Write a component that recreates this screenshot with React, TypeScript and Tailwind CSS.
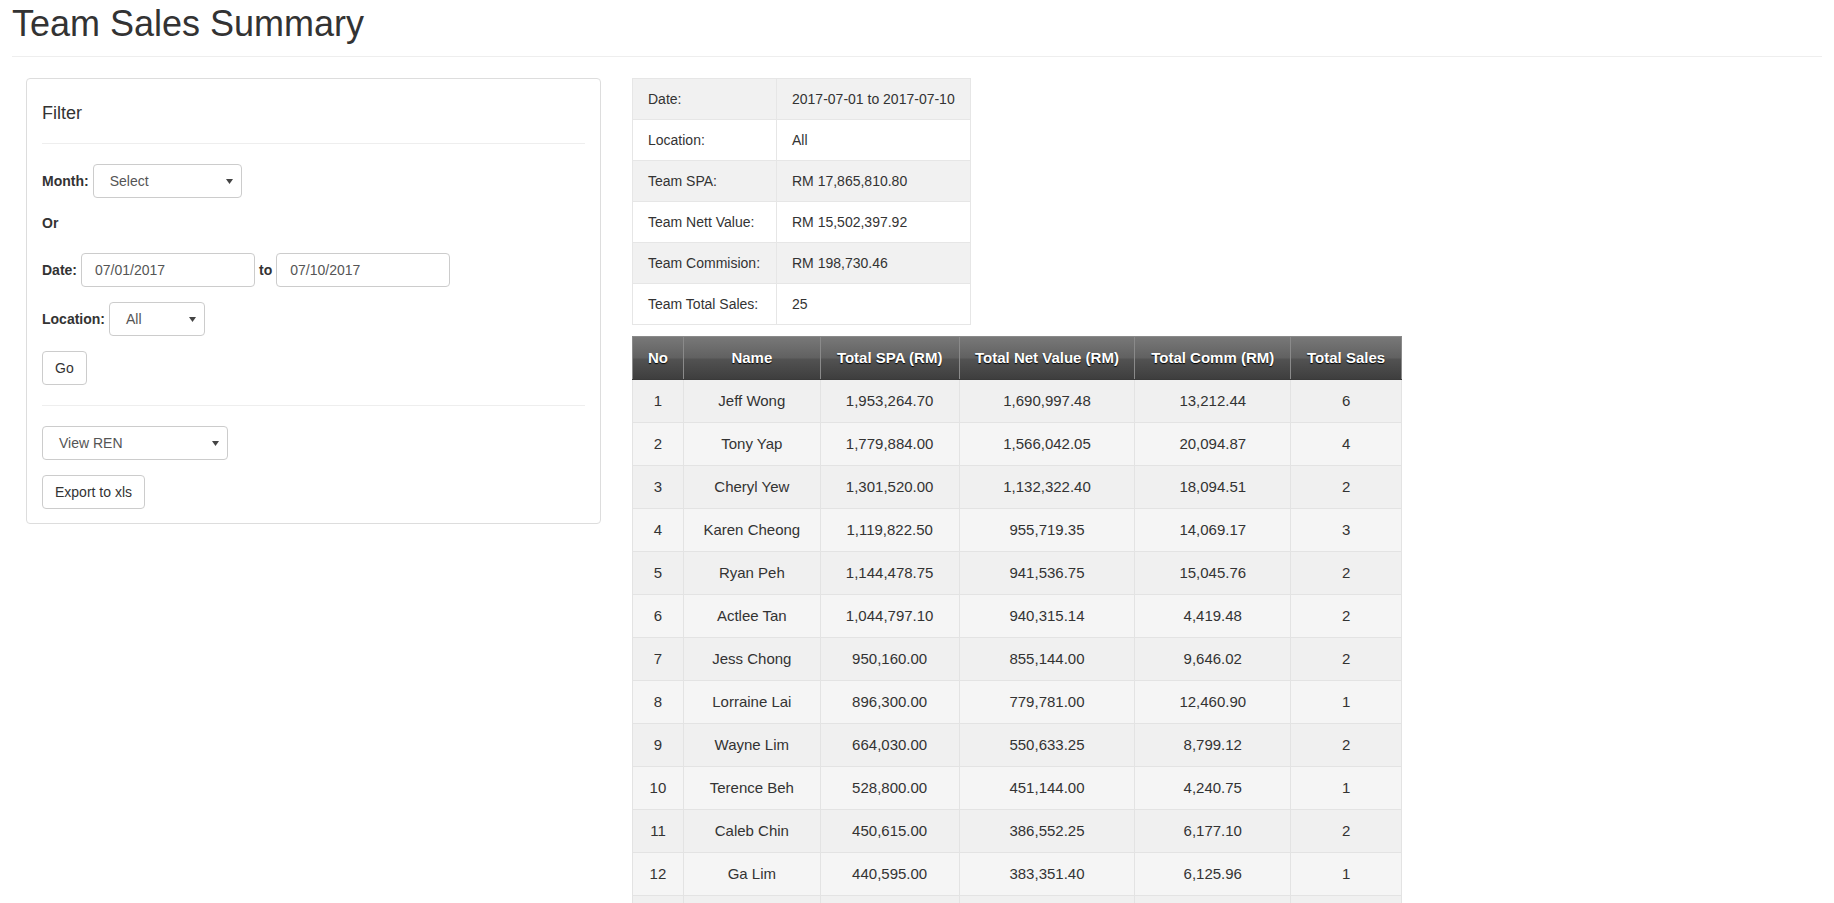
import { ReactNode } from 'react'

const summary = [
  { label: 'Date:', value: '2017-07-01 to 2017-07-10' },
  { label: 'Location:', value: 'All' },
  { label: 'Team SPA:', value: 'RM 17,865,810.80' },
  { label: 'Team Nett Value:', value: 'RM 15,502,397.92' },
  { label: 'Team Commision:', value: 'RM 198,730.46' },
  { label: 'Team Total Sales:', value: '25' },
]

const rows = [
  ['1', 'Jeff Wong', '1,953,264.70', '1,690,997.48', '13,212.44', '6'],
  ['2', 'Tony Yap', '1,779,884.00', '1,566,042.05', '20,094.87', '4'],
  ['3', 'Cheryl Yew', '1,301,520.00', '1,132,322.40', '18,094.51', '2'],
  ['4', 'Karen Cheong', '1,119,822.50', '955,719.35', '14,069.17', '3'],
  ['5', 'Ryan Peh', '1,144,478.75', '941,536.75', '15,045.76', '2'],
  ['6', 'Actlee Tan', '1,044,797.10', '940,315.14', '4,419.48', '2'],
  ['7', 'Jess Chong', '950,160.00', '855,144.00', '9,646.02', '2'],
  ['8', 'Lorraine Lai', '896,300.00', '779,781.00', '12,460.90', '1'],
  ['9', 'Wayne Lim', '664,030.00', '550,633.25', '8,799.12', '2'],
  ['10', 'Terence Beh', '528,800.00', '451,144.00', '4,240.75', '1'],
  ['11', 'Caleb Chin', '450,615.00', '386,552.25', '6,177.10', '2'],
  ['12', 'Ga Lim', '440,595.00', '383,351.40', '6,125.96', '1'],
  ['13', 'Sam Ong', '412,300.00', '361,240.00', '5,830.40', '1'],
  ['14', 'Mei Ling', '398,150.00', '340,015.00', '5,210.00', '1'],
]

const headers = [
  { label: 'No', w: 'w-[51px]' },
  { label: 'Name', w: 'w-[137px]' },
  { label: 'Total SPA (RM)', w: 'w-[139px]' },
  { label: 'Total Net Value (RM)', w: 'w-[176px]' },
  { label: 'Total Comm (RM)', w: 'w-[156px]' },
  { label: 'Total Sales', w: 'w-[111px]' },
]

function FakeSelect({ value, width }: { value: string; width: string }) {
  return (
    <div
      className={`${width} flex h-[34px] items-center justify-between rounded-[4px] border border-[#ccc] bg-white pl-[16px] pr-[8px] text-[#555]`}
    >
      <span>{value}</span>
      <svg width="7" height="5" viewBox="0 0 7 5" className="fill-[#444]">
        <path d="M0 0h7L3.5 5z" />
      </svg>
    </div>
  )
}

function TextBox({ value }: { value: string }) {
  return (
    <div className="flex h-[34px] w-[174px] items-center rounded-[4px] border border-[#ccc] bg-white pl-[13px] text-[#555]">
      {value}
    </div>
  )
}

function Button({ children }: { children: ReactNode }) {
  return (
    <button className="h-[34px] rounded-[4px] border border-[#ccc] bg-white px-[12px] text-[#333]">
      {children}
    </button>
  )
}

export default function App() {
  return (
    <div className="min-h-screen bg-white font-['Liberation_Sans',Arial,sans-serif] text-[14px] leading-[20px] text-[#333]">
      <div className="px-[12px]">
        {/* Page title */}
        <h1 className="border-b border-[#eee] pt-[4px] pb-[12px] text-[36px] leading-[40px] text-[#333]">
          Team Sales Summary
        </h1>

        <div className="flex items-start gap-[31px] pt-[21px] pl-[14px]">
          {/* Filter panel */}
          <div className="w-[575px] rounded-[4px] border border-[#ddd] px-[15px] pt-[14px] pb-[14px]">
            <h4 className="mt-[10px] mb-[10px] text-[18px] leading-[20px]">Filter</h4>
            <div className="my-[20px] h-px bg-[#eee]" />

            <div className="mb-[15px] flex items-center gap-[4px]">
              <span className="font-bold">Month:</span>
              <FakeSelect value="Select" width="w-[149px]" />
            </div>

            <div className="mb-[20px] font-bold">Or</div>

            <div className="mb-[15px] flex items-center gap-[4px]">
              <span className="font-bold">Date:</span>
              <TextBox value="07/01/2017" />
              <span className="font-bold">to</span>
              <TextBox value="07/10/2017" />
            </div>

            <div className="mb-[15px] flex items-center gap-[4px]">
              <span className="font-bold">Location:</span>
              <FakeSelect value="All" width="w-[96px]" />
            </div>

            <Button>Go</Button>

            <div className="my-[20px] h-px bg-[#eee]" />

            <div className="mb-[15px]">
              <FakeSelect value="View REN" width="w-[186px]" />
            </div>

            <Button>Export to xls</Button>
          </div>

          {/* Summary + team table */}
          <div className="flex flex-col items-start gap-[11px]">
            <table className="border-collapse">
              <tbody>
                {summary.map((s, i) => (
                  <tr key={s.label} className={i % 2 === 0 ? 'bg-[#f1f1f1]' : 'bg-white'}>
                    <td className="w-[144px] whitespace-nowrap border border-[#e6e6e6] px-[15px] py-[10px]">
                      {s.label}
                    </td>
                    <td className="w-[193px] whitespace-nowrap border border-[#e6e6e6] px-[15px] py-[10px]">
                      {s.value}
                    </td>
                  </tr>
                ))}
              </tbody>
            </table>

            <table className="w-[770px] border-collapse text-[15px]">
              <thead>
                <tr className="bg-[linear-gradient(to_bottom,#787878_0%,#616161_48%,#525252_52%,#3d3d3d_100%)]">
                  {headers.map((h) => (
                    <th
                      key={h.label}
                      className={`${h.w} h-[43px] border border-[#8a8a8a] border-b-[#3a3a3a] text-center font-bold text-white [text-shadow:0_1px_1px_#000]`}
                    >
                      {h.label}
                    </th>
                  ))}
                </tr>
              </thead>
              <tbody>
                {rows.map((r, i) => (
                  <tr key={r[0]} className={i % 2 === 0 ? 'bg-[#f0f0f0]' : 'bg-[#f5f5f5]'}>
                    {r.map((c, j) => (
                      <td key={j} className="h-[43px] border border-[#e3e3e3] text-center">
                        {c}
                      </td>
                    ))}
                  </tr>
                ))}
              </tbody>
            </table>
          </div>
        </div>
      </div>
    </div>
  )
}
